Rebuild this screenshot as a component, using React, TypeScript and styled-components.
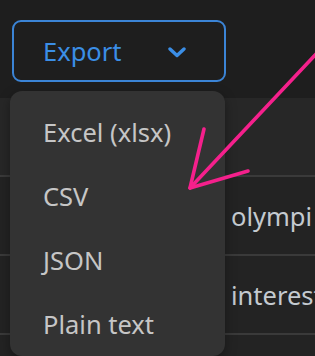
import styled, { createGlobalStyle } from 'styled-components'

const GlobalStyle = createGlobalStyle`
  html, body {
    margin: 0;
    padding: 0;
    background: #1e1e1e;
    font-family: 'Noto Sans', 'Open Sans', sans-serif;
    overflow: hidden;
  }
`

const rows = ['', 'olympi', 'interest', '']

const formats = ['Excel (xlsx)', 'CSV', 'JSON', 'Plain text']

export default function App() {
  return (
    <Page>
      <GlobalStyle />
      <Toolbar>
        <ExportButton>
          Export
          <svg width="18" height="11" viewBox="0 0 18 11">
            <path
              d="M2 2 L9 8.5 L16 2"
              fill="none"
              stroke="#3b8ee6"
              strokeWidth="3.4"
              strokeLinecap="round"
              strokeLinejoin="round"
            />
          </svg>
        </ExportButton>
      </Toolbar>
      <Table>
        {rows.map((r, i) => (
          <Row key={i} $first={i === 0}>
            <Cell />
            <Cell>{r}</Cell>
          </Row>
        ))}
      </Table>
      <Menu>
        {formats.map((f) => (
          <MenuItem key={f}>{f}</MenuItem>
        ))}
      </Menu>
      <Arrow width="315" height="356" viewBox="0 0 315 356">
        <g
          fill="none"
          stroke="#f5208c"
          strokeWidth="3.6"
          strokeLinecap="round"
          strokeLinejoin="round"
        >
          <path d="M318 52 L190 188" />
          <path d="M204 129 L190 188 L248 171" />
        </g>
      </Arrow>
    </Page>
  )
}

const Page = styled.div`
  position: relative;
  width: 315px;
  height: 356px;
  overflow: hidden;
  background: #1e1e1e;
`

const Toolbar = styled.div`
  display: flex;
  padding: 20px 0 0 12px;
  height: 98px;
  box-sizing: border-box;
`

const ExportButton = styled.button`
  display: flex;
  align-items: center;
  justify-content: space-between;
  box-sizing: border-box;
  width: 214px;
  height: 62px;
  padding: 0 38px 0 29px;
  background: transparent;
  border: 2px solid #3b84d6;
  border-radius: 9px;
  color: #3b8ee6;
  font-family: 'Noto Sans', 'Open Sans', sans-serif;
  font-size: 25.5px;
  svg {
    margin-top: 2px;
  }
`

const Table = styled.div`
  display: flex;
  flex-direction: column;
  background: #242424;
`

const Row = styled.div<{ $first?: boolean }>`
  display: grid;
  grid-template-columns: 220px 1fr;
  height: 77px;
  border-top: ${(p) => (p.$first ? 'none' : '2px solid #3a3a3a')};
  background: ${(p) => (p.$first ? '#272727' : '#232323')};
`

const Cell = styled.div`
  display: flex;
  align-items: center;
  padding-left: 11px;
  white-space: nowrap;
  overflow: hidden;
  color: #c4cad0;
  font-size: 25.5px;
`

const Menu = styled.div`
  position: absolute;
  left: 10px;
  top: 91px;
  width: 215px;
  padding-top: 9px;
  background: #333333;
  border-radius: 12px;
  box-shadow: 0 4px 12px rgba(0, 0, 0, 0.35);
`

const MenuItem = styled.div`
  display: flex;
  align-items: center;
  height: 64px;
  padding-left: 33px;
  color: #c6c6c6;
  font-size: 25.5px;
`

const Arrow = styled.svg`
  position: absolute;
  left: 0;
  top: 0;
  pointer-events: none;
`
